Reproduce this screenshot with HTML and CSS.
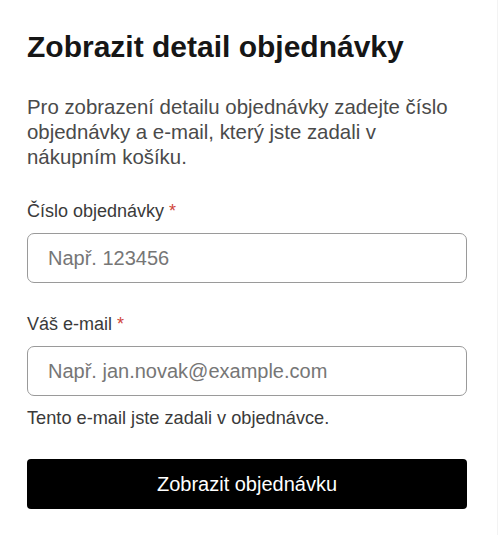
FILE: index.html
```html
<!DOCTYPE html>
<html lang="cs">
<head>
<meta charset="utf-8">
<title>Zobrazit detail objednávky</title>
<link rel="stylesheet" href="styles.css">
</head>
<body>
<main class="card">
  <h1 class="title">Zobrazit detail objednávky</h1>
  <p class="intro">Pro zobrazení detailu objednávky zadejte číslo objednávky a e-mail, který jste zadali v nákupním košíku.</p>
  <form class="form">
    <div class="field">
      <label class="label" for="order">Číslo objednávky <span class="req">*</span></label>
      <input class="input" id="order" type="text" placeholder="Např. 123456">
    </div>
    <div class="field">
      <label class="label" for="email">Váš e-mail <span class="req">*</span></label>
      <input class="input" id="email" type="email" placeholder="Např. jan.novak@example.com">
      <p class="help">Tento e-mail jste zadali v objednávce.</p>
    </div>
    <button class="submit" type="button">Zobrazit objednávku</button>
  </form>
</main>
</body>
</html>
```

FILE: styles.css
```css
* { box-sizing: border-box; }
html, body {
  margin: 0;
  padding: 0;
}
body {
  background: #f3f3f3;
  font-family: "Liberation Sans", Arial, sans-serif;
  height: 535px;
}
.card {
  background: #fff;
  width: 497px;
  min-height: 535px;
  padding: 29px 30px 0 27px;
}
.title {
  margin: 0;
  font-size: 30px;
  line-height: 36px;
  font-weight: 700;
  color: #161616;
}
.intro {
  margin: 30px 0 0;
  max-width: 430px;
  font-size: 20.4px;
  line-height: 25px;
  color: #4a4a4a;
}
.form {
  display: flex;
  flex-direction: column;
  margin-top: 30px;
}
.field {
  display: flex;
  flex-direction: column;
  gap: 11px;
  margin-bottom: 30px;
}
.label {
  font-size: 18px;
  line-height: 22px;
  color: #3a3a3a;
}
.req {
  color: #d0453a;
}
.input {
  height: 50px;
  width: 100%;
  border: 1px solid #9a9a9a;
  border-radius: 7px;
  padding: 0 20px;
  font-family: "Liberation Sans", Arial, sans-serif;
  font-size: 20px;
  color: #222;
  background: #fff;
  outline: none;
}
.input::placeholder {
  color: #767676;
}
.help {
  margin: 0;
  font-size: 18.2px;
  line-height: 22px;
  color: #3a3a3a;
}
.submit {
  height: 50px;
  width: 100%;
  border: 0;
  border-radius: 4px;
  background: #000;
  color: #fff;
  font-family: "Liberation Sans", Arial, sans-serif;
  font-size: 20px;
  cursor: pointer;
}
```
